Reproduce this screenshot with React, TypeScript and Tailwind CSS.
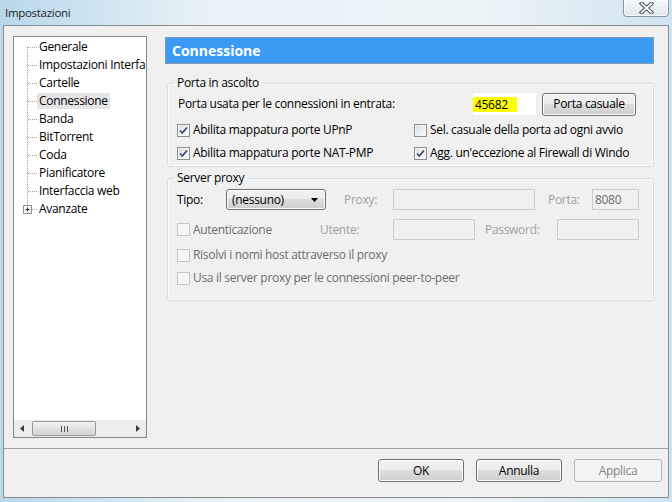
import React from 'react'

const font = "font-['Open_Sans','Noto_Sans',sans-serif]"

const treeItems = [
  'Generale',
  'Impostazioni Interfa',
  'Cartelle',
  'Connessione',
  'Banda',
  'BitTorrent',
  'Coda',
  'Pianificatore',
  'Interfaccia web',
]

function Connector({ first, last, plus }: { first?: boolean; last?: boolean; plus?: boolean }) {
  const y1 = first ? 9 : 0
  const y2 = last ? 9 : 18
  return (
    <svg width="23" height="18" className="shrink-0">
      <line x1="13.5" y1={y1} x2="13.5" y2={y2} stroke="#a0a0a0" strokeDasharray="1 1" />
      <line x1={plus ? 18 : 14} y1="9.5" x2="23" y2="9.5" stroke="#a0a0a0" strokeDasharray="1 1" />
      {plus && (
        <g>
          <rect x="9.5" y="5.5" width="8" height="8" fill="#f7f7f7" stroke="#919191" />
          <line x1="11.5" y1="9.5" x2="15.5" y2="9.5" stroke="#2b2b2b" />
          <line x1="13.5" y1="7.5" x2="13.5" y2="11.5" stroke="#2b2b2b" />
        </g>
      )}
    </svg>
  )
}

function Check({ checked, disabled }: { checked?: boolean; disabled?: boolean }) {
  return (
    <span
      className={
        disabled
          ? 'w-[13px] h-[13px] shrink-0 border border-[#c5c5c5] bg-[#f6f6f6]'
          : 'w-[13px] h-[13px] shrink-0 border border-[#8e8f8f] bg-[linear-gradient(135deg,#d9dcdf,#fdfdfd)] shadow-[inset_0_0_0_1px_#f4f4f4] flex items-center justify-center'
      }
    >
      {checked && (
        <svg width="11" height="11" viewBox="0 0 11 11">
          <path d="M2 5.5 L4.3 8 L9 2.5" fill="none" stroke="#3b4d76" strokeWidth="1.8" />
        </svg>
      )}
    </span>
  )
}

function Btn({ label, w, disabled }: { label: string; w: string; disabled?: boolean }) {
  return (
    <button
      className={
        disabled
          ? `${w} h-[23px] shrink-0 rounded-[3px] border border-[#adb2b5] bg-[#f4f4f4] text-[#838383] text-[12px]`
          : `${w} h-[23px] shrink-0 rounded-[3px] border border-[#707070] bg-[linear-gradient(#f2f2f2_0%,#ebebeb_50%,#dddddd_50%,#cfcfcf_100%)] shadow-[inset_0_0_0_1px_#fbfbfb] text-black text-[12px]`
      }
    >
      {label}
    </button>
  )
}

export default function App() {
  return (
    <div className={`${font} w-[672px] h-[502px] overflow-hidden flex flex-col bg-[linear-gradient(90deg,#b9d7ea,#e6f1f7_30%,#edf4f8_70%,#cfe4f1)] text-[12px] tracking-[-0.3px] text-black`}>
      {/* title bar */}
      <div className="h-[25px] shrink-0 flex items-start">
        <span className="pl-[5px] pt-[4px] text-[11.5px] text-[#1e1e1e]">Impostazioni</span>
        <div className="ml-auto mr-[3px] w-[46px] h-[17px] rounded-b-[4px] border border-t-0 border-[#8a98a6] bg-[linear-gradient(#f4f8fb,#dfe8ee)] shadow-[inset_0_0_0_1px_#ffffffaa] flex items-center justify-center">
          <svg width="15" height="12" viewBox="0 0 15 12">
            <path d="M2.5 1.5 L12.5 10.5 M12.5 1.5 L2.5 10.5" stroke="#4b4f54" strokeWidth="3.8" strokeLinecap="square" />
            <path d="M2.5 1.5 L12.5 10.5 M12.5 1.5 L2.5 10.5" stroke="#ffffff" strokeWidth="1.7" strokeLinecap="square" />
          </svg>
        </div>
      </div>

      {/* window body */}
      <div className="ml-[3px] w-[666px] h-[473px] shrink-0 border border-[#8b8b8b] bg-[#f0f0f0] flex flex-col">
        <div className="flex pt-[10px] pl-[9px]">
          {/* tree */}
          <div className="w-[134px] h-[402px] shrink-0 border border-[#828790] bg-white flex flex-col overflow-hidden">
            <div className="flex-1 pt-[1px] overflow-hidden">
              {treeItems.map((t, i) => (
                <div key={t} className="h-[18px] flex items-center whitespace-nowrap">
                  <Connector first={i === 0} />
                  <span className={t === 'Connessione' ? 'h-[16px] leading-[16px] px-[2px] bg-[#e5e5e5]' : 'h-[16px] leading-[16px] px-[2px]'}>{t}</span>
                </div>
              ))}
              <div className="h-[18px] flex items-center whitespace-nowrap">
                <Connector last plus />
                <span className="h-[16px] leading-[16px] px-[2px]">Avanzate</span>
              </div>
            </div>
            {/* horizontal scrollbar */}
            <div className="h-[17px] shrink-0 bg-[#ececec] flex items-center">
              <div className="w-[17px] h-full flex items-center justify-center">
                <svg width="5" height="7"><path d="M4 0 L0 3.5 L4 7 Z" fill="#3c3c3c" /></svg>
              </div>
              <div className="w-[64px] h-[15px] ml-[1px] rounded-[2px] border border-[#979797] bg-[linear-gradient(#f3f3f3,#e2e2e2_50%,#d4d4d4)] flex items-center justify-center gap-[2px]">
                <span className="w-px h-[6px] bg-[#555]" />
                <span className="w-px h-[6px] bg-[#555]" />
                <span className="w-px h-[6px] bg-[#555]" />
              </div>
              <div className="ml-auto w-[17px] h-full flex items-center justify-center">
                <svg width="5" height="7"><path d="M1 0 L5 3.5 L1 7 Z" fill="#3c3c3c" /></svg>
              </div>
            </div>
          </div>

          {/* right panel */}
          <div className="ml-[18px] w-[489px] pt-[1px]">
            <div className="h-[27px] border border-[#8399b0] bg-[#3b9af4] flex items-center pl-[6px]">
              <span className="text-white font-bold text-[14px] tracking-normal">Connessione</span>
            </div>

            <fieldset className="mt-[11px] ml-[2px] rounded-[3px] border border-[#d5dfe5] shadow-[inset_0_0_0_1px_#fcfcfc] pl-[9px] pr-[17px] pt-[2px] pb-[3px]">
              <legend className="-ml-[3px] px-[3px] leading-[16px]">Porta in ascolto</legend>
              <div className="h-[22px] flex items-center">
                <span className="flex-1 min-w-0 pl-[1px] whitespace-nowrap">Porta usata per le connessioni in entrata:</span>
                <div className="w-[63px] h-[22px] shrink-0 bg-white flex items-center">
                  <span className="bg-[#ffff00] h-[15px] leading-[15px] pl-[2px] pr-[9px]">45682</span>
                </div>
                <div className="ml-[6px]">
                  <Btn label="Porta casuale" w="w-[94px]" />
                </div>
              </div>
              <div className="mt-[5px] h-[20px] flex items-center">
                <div className="w-[237px] shrink-0 flex items-center gap-[3px]">
                  <Check checked />
                  <span>Abilita mappatura porte UPnP</span>
                </div>
                <div className="flex items-center gap-[3px]">
                  <Check />
                  <span>Sel. casuale della porta ad ogni avvio</span>
                </div>
              </div>
              <div className="mt-[3px] h-[20px] flex items-center">
                <div className="w-[237px] shrink-0 flex items-center gap-[3px]">
                  <Check checked />
                  <span>Abilita mappatura porte NAT-PMP</span>
                </div>
                <div className="flex items-center gap-[3px] whitespace-nowrap">
                  <Check checked />
                  <span>Agg. un'eccezione al Firewall di Windo</span>
                </div>
              </div>
            </fieldset>

            <fieldset className="mt-[3px] ml-[2px] rounded-[3px] border border-[#d5dfe5] shadow-[inset_0_0_0_1px_#fcfcfc] pl-[9px] pt-[3px] pb-[12px]">
              <legend className="-ml-[3px] px-[3px] leading-[16px]">Server proxy</legend>
              <div className="h-[21px] flex items-center">
                <span className="w-[49px]">Tipo:</span>
                <div className="w-[100px] h-[21px] rounded-[3px] border border-[#707070] bg-[linear-gradient(#f2f2f2_0%,#ebebeb_50%,#dddddd_50%,#cfcfcf_100%)] shadow-[inset_0_0_0_1px_#fbfbfb] flex items-center pl-[5px] pr-[7px]">
                  <span className="flex-1">(nessuno)</span>
                  <svg width="7" height="4"><path d="M0 0 L7 0 L3.5 4 Z" fill="#000" /></svg>
                </div>
                <span className="ml-[18px] w-[49px] text-[#a0a0a0]">Proxy:</span>
                <div className="w-[142px] h-[21px] border border-[#cbcbcb]" />
                <span className="ml-[13px] w-[44px] text-[#a0a0a0]">Porta:</span>
                <div className="w-[47px] h-[21px] border border-[#cbcbcb] flex items-center pl-[2px] text-[#6d6d6d]">8080</div>
              </div>
              <div className="mt-[9px] h-[21px] flex items-center">
                <div className="w-[143px] flex items-center gap-[3px]">
                  <Check disabled />
                  <span className="text-[#6d6d6d]">Autenticazione</span>
                </div>
                <span className="w-[73px] text-[#a0a0a0]">Utente:</span>
                <div className="w-[82px] h-[21px] border border-[#cbcbcb]" />
                <span className="ml-[10px] w-[72px] text-[#a0a0a0]">Password:</span>
                <div className="w-[82px] h-[21px] border border-[#cbcbcb]" />
              </div>
              <div className="mt-[5px] h-[20px] flex items-center gap-[3px]">
                <Check disabled />
                <span className="text-[#6d6d6d]">Risolvi i nomi host attraverso il proxy</span>
              </div>
              <div className="mt-[3px] h-[20px] flex items-center gap-[3px]">
                <Check disabled />
                <span className="text-[#6d6d6d]">Usa il server proxy per le connessioni peer-to-peer</span>
              </div>
            </fieldset>
          </div>
        </div>

        <div className="mt-[10px] h-px bg-[#a0a0a0]" />

        <div className="pt-[10px] pr-[6px] flex justify-end gap-[12px]">
          <Btn label="OK" w="w-[86px]" />
          <Btn label="Annulla" w="w-[86px]" />
          <Btn label="Applica" w="w-[88px]" disabled />
        </div>
      </div>
    </div>
  )
}
